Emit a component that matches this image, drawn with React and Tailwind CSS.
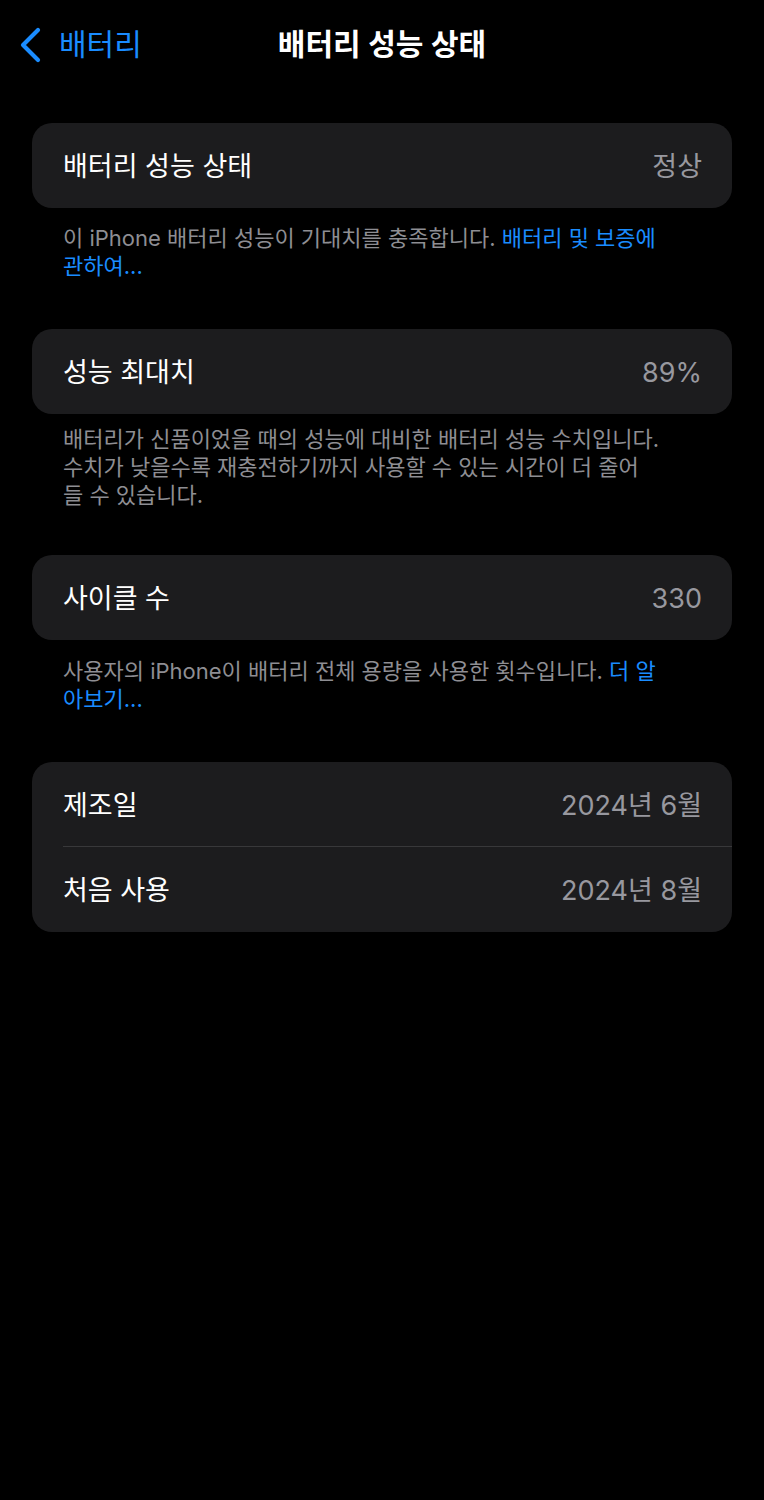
import React from 'react';

function Row({ label, value, divider }) {
  return (
    <div className="relative flex h-[85px] items-center justify-between pl-[31px] pr-[30px] pt-[3px]">
      <span className="text-[27px] text-white">{label}</span>
      <span className="text-[27px] text-[#98989f]">{value}</span>
      {divider && <div className="absolute bottom-0 left-[31px] right-0 h-px bg-[#38383a]" />}
    </div>
  );
}

function Card({ children }) {
  return <div className="overflow-hidden rounded-[20px] bg-[#1c1c1e]">{children}</div>;
}

function Footer({ className = '', children }) {
  return (
    <p className={`px-[31px] text-[22px] leading-[28px] text-[#8e8e93] whitespace-nowrap ${className}`}>
      {children}
    </p>
  );
}

export default function App() {
  return (
    <div className="min-h-[1500px] bg-black font-['Inter','Noto_Sans_CJK_KR',sans-serif] antialiased">
      {/* nav bar */}
      <div className="relative flex h-[90px] items-center justify-center pb-[2px]">
        <div className="absolute left-[18px] top-[27px] flex items-center gap-[17px]">
          <svg width="24" height="36" viewBox="0 0 24 36" fill="none">
            <polyline points="20,3 5,18 20,33" stroke="#1a8cff" strokeWidth="4.2" strokeLinecap="round" strokeLinejoin="round" />
          </svg>
          <span className="text-[30px] leading-none text-[#1a8cff] -mt-[2px]">배터리</span>
        </div>
        <h1 className="text-[30px] font-semibold text-white">배터리 성능 상태</h1>
      </div>

      <div className="px-[32px] pt-[33px]">
        <Card>
          <Row label="배터리 성능 상태" value="정상" />
        </Card>
        <Footer className="pt-[16px] pb-[49px]">
          이 iPhone 배터리 성능이 기대치를 충족합니다. <span className="text-[#1a8cff]">배터리 및 보증에</span>
          <br />
          <span className="text-[#1a8cff]">관하여...</span>
        </Footer>

        <Card>
          <Row label="성능 최대치" value="89%" />
        </Card>
        <Footer className="pt-[11px] pb-[46px]">
          배터리가 신품이었을 때의 성능에 대비한 배터리 성능 수치입니다.
          <br />
          수치가 낮을수록 재충전하기까지 사용할 수 있는 시간이 더 줄어
          <br />
          들 수 있습니다.
        </Footer>

        <Card>
          <Row label="사이클 수" value="330" />
        </Card>
        <Footer className="pt-[17px] pb-[49px]">
          사용자의 iPhone이 배터리 전체 용량을 사용한 횟수입니다. <span className="text-[#1a8cff]">더 알</span>
          <br />
          <span className="text-[#1a8cff]">아보기...</span>
        </Footer>

        <Card>
          <Row label="제조일" value="2024년 6월" divider />
          <Row label="처음 사용" value="2024년 8월" />
        </Card>
      </div>
    </div>
  );
}
